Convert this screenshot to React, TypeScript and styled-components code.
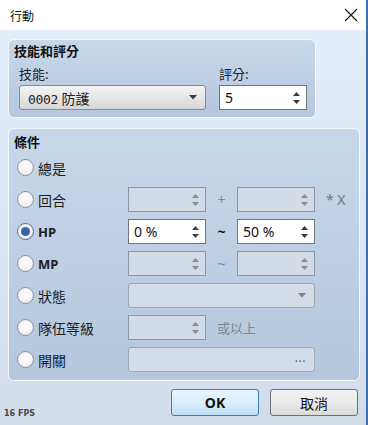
import React from "react";
import styled, { createGlobalStyle, css } from "styled-components";

const GlobalStyle = createGlobalStyle`
  html, body {
    margin: 0;
    padding: 0;
  }
  body {
    font-family: "Noto Sans", "Noto Sans CJK TC", sans-serif;
    color: #1c1c1c;
  }
`;

const Window = styled.div`
  position: relative;
  width: 368px;
  height: 425px;
  box-sizing: border-box;
  border-right: 2px solid #3b6fb6;
  display: flex;
  flex-direction: column;
  overflow: hidden;
`;

const TitleBar = styled.div`
  height: 30px;
  flex: none;
  background: #ffffff;
  display: flex;
  align-items: center;
  justify-content: space-between;
  padding: 0 8px 0 10px;
  font-family: "Noto Sans CJK TC", sans-serif;
  font-size: 12px;
  color: #111;
`;

const Body = styled.div`
  flex: 1;
  background: linear-gradient(180deg, #e3eefa 0%, #d9e4f0 60%, #d2dde9 100%);
  padding: 9px 0 0 8px;
  display: flex;
  flex-direction: column;
`;

const Group = styled.div<{ $width: number; $height: number }>`
  width: ${(p) => p.$width}px;
  height: ${(p) => p.$height}px;
  box-sizing: border-box;
  border: 1px solid #f4f8fc;
  border-radius: 6px;
  background: linear-gradient(180deg, #c8d8eb 0%, #b4c7de 100%);
  & + & {
    margin-top: 10px;
  }
`;

const SkillGroup = styled(Group)`
  padding: 3px 0 0 5px;
`;

const CondGroup = styled(Group)`
  padding: 5px 0 0 5px;
`;

const GroupTitle = styled.div`
  font-family: "Noto Sans CJK TC", sans-serif;
  font-weight: 700;
  font-size: 13px;
  line-height: 16px;
  color: #111;
`;

const FieldRow = styled.div`
  display: flex;
  gap: 13px;
  margin-top: 7px;
  padding-left: 5px;
`;

const Field = styled.div`
  display: flex;
  flex-direction: column;
  gap: 3px;
`;

const FieldLabel = styled.div`
  font-family: "Noto Sans CJK TC", sans-serif;
  font-size: 13px;
  line-height: 16px;
  color: #222;
`;

const SelectBox = styled.div<{ $width: number; $disabled?: boolean }>`
  width: ${(p) => p.$width}px;
  height: 25px;
  box-sizing: border-box;
  border-radius: 3px;
  display: flex;
  align-items: center;
  justify-content: space-between;
  padding: 0 8px 0 8px;
  font-size: 13px;
  color: #222;
  ${(p) =>
    p.$disabled
      ? css`
          border: 1px solid #9aa7b5;
          background: #d3dce7;
        `
      : css`
          border: 1px solid #858b92;
          background: linear-gradient(180deg, #f4f4f4 0%, #e6e6e6 50%, #d6d6d6 100%);
        `}
`;

const MonoText = styled.span`
  font-family: "DejaVu Sans Mono", "Noto Sans CJK TC", monospace;
  font-size: 13px;
  letter-spacing: -0.3px;
`;

const CjkText = styled.span`
  font-family: "Noto Sans CJK TC", sans-serif;
  font-size: 14px;
`;

const Spin = styled.div<{ $width: number; $disabled?: boolean }>`
  width: ${(p) => p.$width}px;
  height: 25px;
  box-sizing: border-box;
  display: flex;
  align-items: center;
  justify-content: space-between;
  padding: 0 6px 0 5px;
  font-size: 14px;
  color: #111;
  border: 1px solid ${(p) => (p.$disabled ? "#8b97a3" : "#6f757c")};
  background: ${(p) => (p.$disabled ? "#d3dce6" : "#ffffff")};
`;

const Grid = styled.div`
  display: grid;
  grid-template-columns: 111px 78px 31px 78px auto;
  grid-auto-rows: 25px;
  row-gap: 7px;
  margin-top: 5px;
  padding-left: 3px;
`;

const RadioCell = styled.div`
  grid-column: 1;
  display: flex;
  align-items: center;
  gap: 4px;
`;

const Radio = styled.span<{ $checked?: boolean }>`
  width: 17px;
  height: 17px;
  box-sizing: border-box;
  border-radius: 50%;
  border: 1px solid ${(p) => (p.$checked ? "#4b6fa8" : "#8a8f96")};
  background: radial-gradient(circle at 50% 40%, #ffffff 0%, #f4f4f4 55%, #dcdcdc 100%);
  display: flex;
  align-items: center;
  justify-content: center;
  &::after {
    content: "";
    display: ${(p) => (p.$checked ? "block" : "none")};
    width: 9px;
    height: 9px;
    border-radius: 50%;
    background: #3a62ab;
  }
`;

const RadioLabel = styled.span<{ $latin?: boolean }>`
  font-family: "Noto Sans", "Noto Sans CJK TC", sans-serif;
  font-size: ${(p) => (p.$latin ? "13px" : "14px")};
  font-weight: ${(p) => (p.$latin ? 700 : 400)};
  color: #1e1e1e;
`;

const Sep = styled.div<{ $dim?: boolean }>`
  display: flex;
  align-items: center;
  justify-content: center;
  font-size: 14px;
  font-weight: ${(p) => (p.$dim ? 400 : 700)};
  color: ${(p) => (p.$dim ? "#7d8895" : "#111")};
`;

const Suffix = styled.div`
  display: flex;
  align-items: center;
  padding-left: 11px;
  font-size: 14px;
  color: #6e7986;
`;

const SpanCell = styled.div<{ $from: number; $span: number }>`
  grid-column: ${(p) => p.$from} / span ${(p) => p.$span};
  display: flex;
  align-items: center;
`;

const DimText = styled.span`
  padding-left: 11px;
  font-family: "Noto Sans CJK TC", sans-serif;
  font-size: 13px;
  color: #7c8794;
`;

const Dots = styled.span`
  font-size: 12px;
  color: #555;
  letter-spacing: 0.5px;
  padding-bottom: 4px;
`;

const Footer = styled.div`
  display: flex;
  justify-content: flex-end;
  gap: 11px;
  padding: 8px 8px 0 0;
`;

const Button = styled.button<{ $primary?: boolean }>`
  width: 88px;
  height: 27px;
  box-sizing: border-box;
  border-radius: 3px;
  font-family: "Noto Sans", "Noto Sans CJK TC", sans-serif;
  font-size: 14px;
  color: #111;
  padding: 0;
  ${(p) =>
    p.$primary
      ? css`
          border: 1px solid #3c7fb1;
          background: linear-gradient(180deg, #eaf5fd 0%, #d9edfb 50%, #bedff7 100%);
          font-weight: 700;
        `
      : css`
          border: 1px solid #707070;
          background: linear-gradient(180deg, #f3f3f3 0%, #ebebeb 50%, #dadada 100%);
        `}
`;

const Fps = styled.div`
  position: absolute;
  left: 4px;
  bottom: 7px;
  font-family: "DejaVu Sans", sans-serif;
  font-weight: 700;
  font-size: 8px;
  color: #4a4a4a;
`;

const SpinArrows = ({ dim }: { dim?: boolean }) => (
  <svg width="7" height="16" viewBox="0 0 7 16">
    <path d="M0 6 L3.5 2 L7 6 Z" fill={dim ? "#8a8f96" : "#3c3c3c"} />
    <path d="M0 10 L3.5 14 L7 10 Z" fill={dim ? "#8a8f96" : "#3c3c3c"} />
  </svg>
);

const DropArrow = ({ dim }: { dim?: boolean }) => (
  <svg width="8" height="5" viewBox="0 0 8 5">
    <path d="M0 0 L8 0 L4 4.5 Z" fill={dim ? "#7a7f86" : "#3c3c3c"} />
  </svg>
);

const CloseIcon = () => (
  <svg width="14" height="14" viewBox="0 0 14 14">
    <path d="M1 1 L13 13 M13 1 L1 13" stroke="#111" strokeWidth="1.1" />
  </svg>
);

const RadioRow = ({ label, checked, latin }: { label: string; checked?: boolean; latin?: boolean }) => (
  <RadioCell>
    <Radio $checked={checked} />
    <RadioLabel $latin={latin}>{label}</RadioLabel>
  </RadioCell>
);

export default function App() {
  return (
    <>
      <GlobalStyle />
      <Window>
        <TitleBar>
          <span>行動</span>
          <CloseIcon />
        </TitleBar>
        <Body>
          <SkillGroup $width={308} $height={79}>
            <GroupTitle>技能和評分</GroupTitle>
            <FieldRow>
              <Field>
                <FieldLabel>技能:</FieldLabel>
                <SelectBox $width={187}>
                  <span>
                    <MonoText>0002</MonoText> <CjkText>防護</CjkText>
                  </span>
                  <DropArrow />
                </SelectBox>
              </Field>
              <Field>
                <FieldLabel>評分:</FieldLabel>
                <Spin $width={88}>
                  <span>5</span>
                  <SpinArrows />
                </Spin>
              </Field>
            </FieldRow>
          </SkillGroup>

          <CondGroup $width={352} $height={253}>
            <GroupTitle>條件</GroupTitle>
            <Grid>
              <RadioRow label="總是" />
              <SpanCell $from={2} $span={4} />

              <RadioRow label="回合" />
              <Spin $width={78} $disabled>
                <span />
                <SpinArrows dim />
              </Spin>
              <Sep $dim>+</Sep>
              <Spin $width={78} $disabled>
                <span />
                <SpinArrows dim />
              </Spin>
              <Suffix>* X</Suffix>

              <RadioRow label="HP" checked latin />
              <Spin $width={78}>
                <span>0 %</span>
                <SpinArrows />
              </Spin>
              <Sep>~</Sep>
              <Spin $width={78}>
                <span>50 %</span>
                <SpinArrows />
              </Spin>
              <div />

              <RadioRow label="MP" latin />
              <Spin $width={78} $disabled>
                <span />
                <SpinArrows dim />
              </Spin>
              <Sep $dim>~</Sep>
              <Spin $width={78} $disabled>
                <span />
                <SpinArrows dim />
              </Spin>
              <div />

              <RadioRow label="狀態" />
              <SpanCell $from={2} $span={3}>
                <SelectBox $width={187} $disabled>
                  <span />
                  <DropArrow dim />
                </SelectBox>
              </SpanCell>
              <div />

              <RadioRow label="隊伍等級" />
              <Spin $width={78} $disabled>
                <span />
                <SpinArrows dim />
              </Spin>
              <SpanCell $from={3} $span={3}>
                <DimText>或以上</DimText>
              </SpanCell>

              <RadioRow label="開關" />
              <SpanCell $from={2} $span={3}>
                <SelectBox $width={187} $disabled>
                  <span />
                  <Dots>...</Dots>
                </SelectBox>
              </SpanCell>
              <div />
            </Grid>
          </CondGroup>

          <Footer>
            <Button $primary>OK</Button>
            <Button>取消</Button>
          </Footer>
        </Body>
        <Fps>16 FPS</Fps>
      </Window>
    </>
  );
}
